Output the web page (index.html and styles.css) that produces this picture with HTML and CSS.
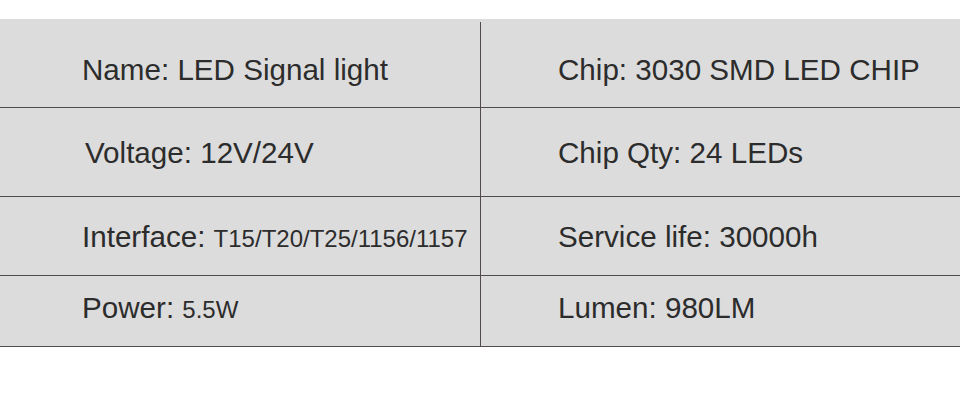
FILE: index.html
```html
<!DOCTYPE html>
<html>
<head>
<meta charset="utf-8">
<link rel="stylesheet" href="styles.css">
</head>
<body>
<div class="page">
  <div class="spec">
    <div class="row row-1">
      <div class="cell left first">Name: LED Signal light</div>
      <div class="cell right">Chip: 3030 SMD LED CHIP</div>
    </div>
    <div class="row row-2">
      <div class="cell left shift">Voltage: 12V/24V</div>
      <div class="cell right">Chip Qty: 24 LEDs</div>
    </div>
    <div class="row row-3">
      <div class="cell left">Interface: <span class="small">T15/T20/T25/1156/1157</span></div>
      <div class="cell right">Service life: 30000h</div>
    </div>
    <div class="row row-4">
      <div class="cell left">Power: <span class="small">5.5W</span></div>
      <div class="cell right">Lumen: 980LM</div>
    </div>
  </div>
</div>
</body>
</html>
```

FILE: styles.css
```css
html, body {
  margin: 0;
  padding: 0;
  background: #ffffff;
}

.page {
  width: 960px;
  height: 416px;
  padding-top: 19px;
  box-sizing: border-box;
  font-family: "Liberation Sans", Arial, sans-serif;
  color: #2c2c2c;
}

.spec {
  display: flex;
  flex-direction: column;
}

.row {
  display: flex;
  background: #dcdcdc;
  border-bottom: 1px solid #514b4d;
}

.row-1 { height: 88px; }
.row-2 { height: 88px; }
.row-3 { height: 78px; }
.row-4 { height: 70px; }

.cell {
  font-size: 29.6px;
  line-height: 34px;
  box-sizing: border-box;
  white-space: nowrap;
}

.left {
  width: 481px;
  padding-left: 82px;
  border-right: 1px solid #514b4d;
}

.left.shift {
  padding-left: 85px;
}

.left.first {
  margin-top: 3px;
}

.right {
  flex: 1;
  padding-left: 77px;
}

.row-1 .cell { padding-top: 34px; }
.row-1 .left.first { padding-top: 31px; }
.row-2 .cell { padding-top: 28px; }
.row-3 .cell { padding-top: 23px; }
.row-4 .cell { padding-top: 15px; }

.small {
  font-size: 24px;
}
```
